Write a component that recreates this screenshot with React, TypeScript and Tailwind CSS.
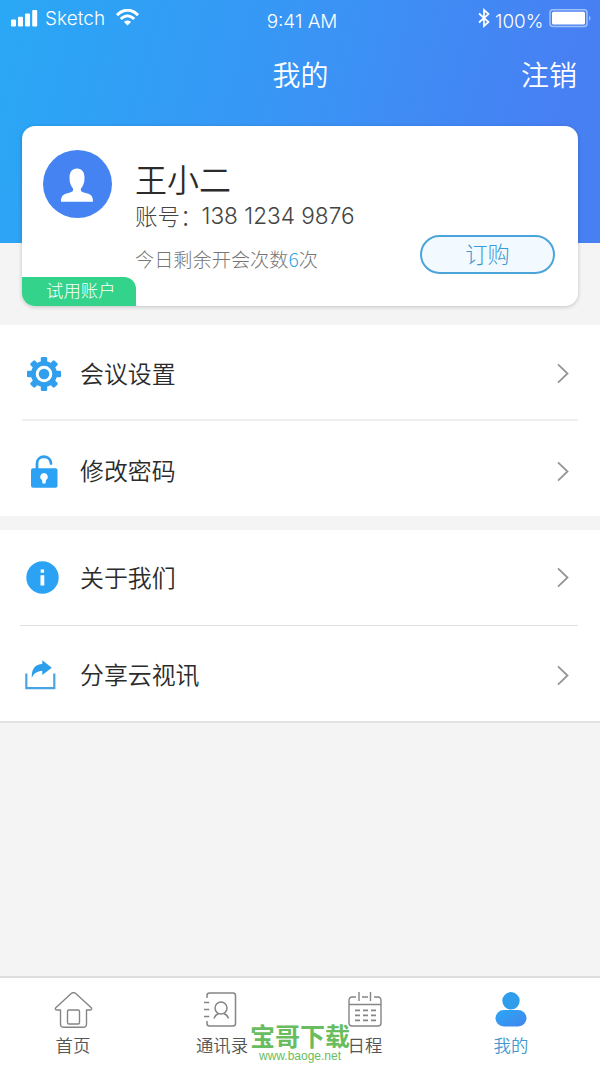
import type { ReactNode } from "react";

const CJK = "font-['Noto_Sans_CJK_SC',sans-serif]";

function StatusBar() {
  return (
    <div className="flex h-[40px] items-start justify-between pl-[11px] pr-[7px] font-['Inter',sans-serif] text-white">
      <div className="flex w-[200px] items-start pt-[9px]">
        <svg className="mt-px" width="27" height="17" viewBox="0 0 27 17" fill="currentColor">
          <rect x="0" y="9.5" width="5" height="7" rx="1" />
          <rect x="7" y="6.8" width="5" height="9.7" rx="1" />
          <rect x="14" y="3.5" width="5" height="13" rx="1" />
          <rect x="21.2" y="0" width="5" height="16.5" rx="1" />
        </svg>
        <span className="ml-[7px] w-[61px] whitespace-nowrap text-[18.9px] font-light leading-[20px] tracking-[0.1px]">Sketch</span>
        <svg className="ml-[10px]" width="23" height="17" viewBox="0 0 23 17" fill="none" stroke="currentColor">
          <path d="M1 6.2C7 -.5 16 -.5 22 6.2" strokeWidth="3" />
          <path d="M4.8 10C9 5.7 14 5.7 18.2 10" strokeWidth="2.8" />
          <path d="M8 13C10 11 13 11 15 13L11.5 16.5Z" fill="currentColor" stroke="none" />
        </svg>
      </div>
      <span className="pt-[12px] text-[18.9px] font-light leading-[20px]">9:41 AM</span>
      <div className="flex w-[200px] items-start justify-end pt-[8px]">
        <svg width="12" height="20" viewBox="0 0 12 20" fill="none" stroke="currentColor" strokeWidth="1.7">
          <path d="M1 5.5L10.5 14L6 18V2L10.5 6L1 14.5" />
        </svg>
        <span className="ml-[5px] mt-[4px] w-[50px] whitespace-nowrap text-[18.9px] font-light leading-[20px]">100%</span>
        <svg className="ml-[4px] mt-px" width="44" height="19" viewBox="0 0 44 19">
          <rect x="1" y=".8" width="37" height="16.8" rx="3" fill="none" stroke="#fff" strokeOpacity=".5" strokeWidth="1.5" />
          <rect x="3" y="2.8" width="33" height="12.8" rx="1.5" fill="#fff" />
          <path d="M40 6.5q3 2.7 0 5.4z" fill="#fff" fillOpacity=".5" />
        </svg>
      </div>
    </div>
  );
}

function Header() {
  return (
    <header className="h-[243px] bg-[linear-gradient(105deg,#2aa7f5_2%,#3896f5_45%,#4780f3_88%)]">
      <StatusBar />
      <div className="grid grid-cols-[1fr_auto_1fr] items-center pl-[24px] pr-[23px] pt-[14px] text-[28px] font-[350] leading-[40px] text-white">
        <span />
        <h1>我的</h1>
        <button className="justify-self-end">注销</button>
      </div>
    </header>
  );
}

function ProfileCard() {
  return (
    <section className="relative mx-[22px] -mt-[117px] flex h-[180px] overflow-hidden rounded-[13px] bg-white shadow-[0_1px_4px_rgba(0,0,0,0.2)]">
      <div className="flex w-[113px] shrink-0 flex-col justify-between">
        <svg className="ml-[21px] mt-[24px]" width="69" height="68" viewBox="0 0 69 68">
          <ellipse cx="34.5" cy="34" rx="34.5" ry="34" fill="#4683f2" />
          <path
            d="M34 18.5C39 18.5 41.5 22 41.5 28C41.5 33 40 36 38 38.5C37.6 41 38 41.5 41 42.5C48 44.2 50 45.5 50 51.8H18C18 45.5 20 44.2 27 42.5C30 41.5 30.4 41 30 38.5C28 36 26.5 33 26.5 28C26.5 22 29 18.5 34 18.5Z"
            fill="#fff"
          />
        </svg>
        <span className="h-[29px] w-[114px] rounded-tr-[12px] bg-[#33d38b] pl-[24px] text-[17.4px] font-light leading-[26px] text-white">
          试用账户
        </span>
      </div>
      <div className="flex flex-1 flex-col whitespace-nowrap pt-[31px]">
        <h2 className="text-[32px] font-[350] leading-[42px] text-[#2b2b2b]">王小二</h2>
        <p className="flex text-[22.5px] font-light leading-[32px] text-[#444]">
          账号：<span className="-ml-px font-['Inter',sans-serif] text-[22.6px] leading-[33px]">138 1234 9876</span>
        </p>
        <p className="mt-[12px] text-[19.2px] font-light leading-[30px] text-[#777]">
          今日剩余开会次数<span className="text-[#2b9fe5]">6</span>次
        </p>
      </div>
      <button className="mb-[32px] mr-[23px] h-[39px] w-[135px] self-end rounded-full border-2 border-[#4ba5da] bg-[#f3faff] pb-[2px] text-[22.3px] font-light leading-[33px] text-[#3c9bd4]">
        订购
      </button>
    </section>
  );
}

function GearIcon() {
  return (
    <svg width="34" height="34" viewBox="0 0 34 34" fill="#319fee">
      <rect x="13.8" y="0" width="6.4" height="34" rx="1.3" />
      <rect x="13.8" y="0" width="6.4" height="34" rx="1.3" transform="rotate(45 17 17)" />
      <rect x="13.8" y="0" width="6.4" height="34" rx="1.3" transform="rotate(90 17 17)" />
      <rect x="13.8" y="0" width="6.4" height="34" rx="1.3" transform="rotate(135 17 17)" />
      <circle cx="17" cy="17" r="13" />
      <circle cx="17" cy="17" r="6.8" fill="none" stroke="#fff" strokeWidth="3" />
    </svg>
  );
}

function LockIcon() {
  return (
    <svg width="28" height="33" viewBox="0 0 28 33">
      <path d="M7 14V8.5C7 -.5 20.5 -.5 21 8.5" fill="none" stroke="#319fee" strokeWidth="2.8" strokeLinecap="round" />
      <rect x="1" y="13.2" width="26.5" height="19.5" rx="2" fill="#2ba2f4" />
      <path d="M14 18A3.8 3.8 0 0 1 16 25L15.5 28.5H12.5L12 25A3.8 3.8 0 0 1 14 18Z" fill="#fff" />
    </svg>
  );
}

function InfoIcon() {
  return (
    <svg width="33" height="33" viewBox="0 0 33 33">
      <circle cx="16.5" cy="16.5" r="16.2" fill="#2ba2f4" />
      <path d="M14.7 8.5h3.4v3.3h-3.4zM14.5 14.2h3.8v10.3h-3.8z" fill="#fff" />
    </svg>
  );
}

function ShareIcon() {
  return (
    <svg width="31" height="30" viewBox="0 0 31 30">
      <path d="M1.3 13.5V28.2H29.3V13.5" fill="none" stroke="#47a5e5" strokeWidth="2.2" />
      <path d="M6.8 18C6.3 8.5 10.5 4.2 17.3 4V.2L26.8 7.7L17.3 15V11C12.3 11 9 13 6.8 18Z" fill="#2f9eea" />
    </svg>
  );
}

function MenuRow({ icon, label, className = "" }: { icon: ReactNode; label: string; className?: string }) {
  return (
    <button className={"flex w-full items-center text-left " + className}>
      <span className="flex w-[58px] justify-center">{icon}</span>
      <span className="pb-[2px] text-[23.9px] font-[350] leading-[36px] text-[#2b2b2b]">{label}</span>
      <svg className="ml-auto mr-[9px]" width="12" height="21" viewBox="0 0 12 21" fill="none" stroke="#959595" strokeWidth="1.8">
        <path d="M1 1.3L10.5 10.5L1 19.7" />
      </svg>
    </button>
  );
}

const LINE = "stroke-[#858585] fill-none";

function HomeIcon() {
  return (
    <svg width="39" height="38" viewBox="0 0 39 38" className={LINE} strokeWidth="1.4" strokeLinejoin="round">
      <path d="M6.5 18V32Q6.5 35.3 10 35.3H29Q32.5 35.3 32.5 32V18H36Q38 18 37.5 16L21.5 1.3Q19.5 0 17.5 1.3L1.5 16Q1 18 3 18Z" />
      <rect x="13.5" y="18" width="12" height="14" rx="1.5" />
    </svg>
  );
}

function ContactsIcon() {
  return (
    <svg className="mr-[4px]" width="34" height="35" viewBox="0 0 34 35" className={LINE + " mr-[4px]"} strokeWidth="1.5">
      <path d="M4 6V3.5Q4 1 6.5 1H30Q32.5 1 32.5 3.5V31.5Q32.5 34 30 34H6.5Q4 34 4 31.5V29M1 10.5H6.3M1 17.5H6.3M1 24.5H6.3" />
      <circle cx="18" cy="16" r="6" />
      <path d="M11 26.5Q12.5 22.5 15.5 21.8M25.5 26.5Q24 22.5 21 21.8" />
    </svg>
  );
}

function CalendarIcon() {
  return (
    <svg width="34" height="36" viewBox="0 0 34 36" className={LINE} strokeWidth="1.4">
      <path d="M8 5H4Q1 5 1 9V31Q1 34 4 34H30Q33 34 33 31V9Q33 5 30 5H26M14 5H20M1 12.5H33M11 0V9M22.5 0V9" />
      <path d="M7 18.3H12M15 18.3H20M23 18.3H28M7 23.3H12M15 23.3H20M23 23.3H28M7 28.3H12M15 28.3H20M23 28.3H28" strokeWidth="1.7" />
    </svg>
  );
}

function UserIcon() {
  return (
    <svg width="32" height="35" viewBox="0 0 32 35">
      <defs>
        <linearGradient id="user" x1="0" y1="0" x2="1" y2="1">
          <stop offset="0" stopColor="#2ba7f5" />
          <stop offset="1" stopColor="#4285ee" />
        </linearGradient>
      </defs>
      <circle cx="16" cy="8.8" r="8.7" fill="#309dec" />
      <rect x=".5" y="18" width="31" height="16.5" rx="8.25" fill="url(#user)" />
    </svg>
  );
}

function Tab({ icon, label, active = false, className = "" }: { icon: ReactNode; label: string; active?: boolean; className?: string }) {
  return (
    <button className={"flex flex-col items-center pt-[14px] " + className}>
      <span className="flex h-[38px] items-start">{icon}</span>
      <span className={"whitespace-nowrap text-[17.4px] font-[350] leading-[29px] " + (active ? "text-[#4598ce]" : "text-[#555]")}>{label}</span>
    </button>
  );
}

export default function App() {
  return (
    <div className={"relative flex h-[1067px] w-[600px] flex-col overflow-hidden bg-[#f4f4f4] " + CJK}>
      <Header />
      <ProfileCard />
      <main className="mt-[19px]">
        <section className="bg-white px-[22px]">
          <MenuRow icon={<span className="mr-[14px]"><GearIcon /></span>} label="会议设置" className="h-[96px] border-b-2 border-[#eeeeee] pt-[3px]" />
          <MenuRow icon={<span className="mr-[14px]"><LockIcon /></span>} label="修改密码" className="h-[95px] pt-[5px]" />
        </section>
        <section className="mt-[14px] border-b-2 border-[#e2e2e2] bg-white pl-[20px] pr-[22px]">
          <MenuRow icon={<span className="mr-[14px]"><InfoIcon /></span>} label="关于我们" className="h-[96px] border-b border-[#e0e0e0] [&>span:nth-child(2)]:ml-[2px]" />
          <MenuRow icon={<span className="mr-[17px]"><ShareIcon /></span>} label="分享云视讯" className="h-[95px] pt-[3px] [&>span:nth-child(2)]:ml-[2px]" />
        </section>
      </main>
      <nav className="mt-auto grid h-[91px] grid-cols-4 border-t-2 border-[#dddddd] bg-white">
        <Tab icon={<HomeIcon />} label="首页" className="-translate-x-[2px]" />
        <Tab icon={<ContactsIcon />} label="通讯录" className="-translate-x-[3px]" />
        <Tab icon={<CalendarIcon />} label="日程" className="-translate-x-[10px]" />
        <Tab icon={<UserIcon />} label="我的" active className="-translate-x-[14px]" />
      </nav>
      <div className="absolute left-[240px] top-[1020px] w-[120px] text-center text-[#69bd60]">
        <div className="text-[25px] font-bold leading-[30px]">宝哥下载</div>
        <div className="font-['Liberation_Sans',sans-serif] text-[12px] leading-[13px]">www.baoge.net</div>
      </div>
    </div>
  );
}
